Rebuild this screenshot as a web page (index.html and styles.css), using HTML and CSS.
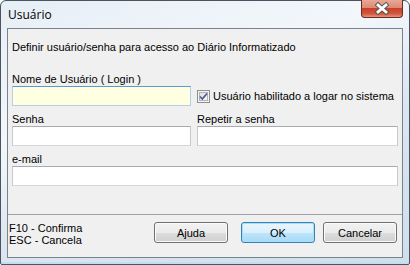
FILE: index.html
```html
<!DOCTYPE html>
<html>
    <head>
        <title>Usuário</title>
        <link rel="stylesheet" href="styles.css">
    </head>
    <body>
        <div class="window">
            <div class="titlebar">
                <span class="title">Usuário</span>
                <div class="close-button">
                    <svg width="40" height="17" viewBox="0 0 40 17">
                        <path d="M16 5 L24 12 M24 5 L16 12" fill="none" stroke="#505050" stroke-width="4.6" stroke-linecap="square"/>
                        <path d="M16 5 L24 12 M24 5 L16 12" fill="none" stroke="#ffffff" stroke-width="2.8" stroke-linecap="square"/>
                    </svg>
                </div>
            </div>
            <div class="client">
                <div class="form-area">
                    <p class="intro">Definir usuário/senha para acesso ao Diário Informatizado</p>

                    <div class="row">
                        <div class="field">
                            <label class="label">Nome de Usuário ( Login )</label>
                            <div class="row-inline">
                                <input class="textbox textbox-focus" type="text">
                                <label class="check">
                                    <svg class="check-box" width="13" height="13" viewBox="0 0 13 13">
                                        <defs>
                                            <linearGradient id="cb" x1="0" y1="0" x2="1" y2="1">
                                                <stop offset="0" stop-color="#dcdcdc"/>
                                                <stop offset="1" stop-color="#fbfbfb"/>
                                            </linearGradient>
                                        </defs>
                                        <rect x="0.5" y="0.5" width="12" height="12" fill="#f4f4f4" stroke="#8e8f8f"/>
                                        <rect x="2.5" y="2.5" width="8" height="8" fill="url(#cb)" stroke="#b4b4b4"/>
                                        <path d="M3 6.5 L5.3 9 L10 3.5" fill="none" stroke="#4a5f97" stroke-width="1.8"/>
                                    </svg>
                                    Usuário habilitado a logar no sistema
                                </label>
                            </div>
                        </div>
                    </div>

                    <div class="row">
                        <div class="field field-left">
                            <label class="label">Senha</label>
                            <input class="textbox" type="password">
                        </div>
                        <div class="field">
                            <label class="label">Repetir a senha</label>
                            <input class="textbox" type="password">
                        </div>
                    </div>

                    <div class="row">
                        <div class="field">
                            <label class="label">e-mail</label>
                            <input class="textbox textbox-wide" type="text">
                        </div>
                    </div>
                </div>

                <div class="bottom-panel">
                    <div class="shortcuts">
                        <div>F10 - Confirma</div>
                        <div>ESC - Cancela</div>
                    </div>
                    <div class="buttons">
                        <button class="button help-button">Ajuda</button>
                        <button class="button button-default">OK</button>
                        <button class="button">Cancelar</button>
                    </div>
                </div>
            </div>
        </div>
    </body>
</html>
```

FILE: styles.css
```css
body{
    margin: 0;
    background-color: #ffffff;
    font-family: "Liberation Sans", Arial, sans-serif;
    font-size: 11px;
    color: #000000;
}

.window{
    width: 410px;
    height: 265px;
    box-sizing: border-box;
    border: 1px solid #4b545e;
    border-radius: 6px 6px 2px 2px;
    background: linear-gradient(160deg, #e6eef6 0%, #f3f7fb 35%, #dbe6f1 60%, #cfdfec 100%);
    padding: 0 6px 6px 6px;
    display: flex;
    flex-direction: column;
    box-shadow: inset 0 -2px 0 #bfe0ee;
}

.titlebar{
    height: 27px;
    display: flex;
    align-items: flex-start;
}

.title{
    font-family: "Open Sans", "Liberation Sans", sans-serif;
    font-size: 12px;
    margin-top: 5px;
    margin-left: 1px;
    color: #000000;
}

.close-button{
    margin-left: auto;
    margin-top: -1px;
    width: 42px;
    height: 18px;
    border: 1px solid #6a2a20;
    border-top: none;
    border-radius: 0 0 4px 4px;
    box-sizing: border-box;
    background: linear-gradient(#e9a797 0%, #de8a74 45%, #c7412a 50%, #d2563c 80%, #e6957f 100%);
    display: flex;
    justify-content: center;
}

.client{
    flex: 1;
    background-color: #f0f0f0;
    border: 1px solid #78838f;
    display: flex;
    flex-direction: column;
}

.form-area{
    flex: 1;
    padding: 12px 4px 0 4px;
}

.intro{
    margin: 0 0 19px 0;
    line-height: 13px;
}

.row{
    display: flex;
    gap: 6px;
    margin-bottom: 7px;
}

.field{
    flex: 1;
    display: flex;
    flex-direction: column;
}

.field-left{
    flex: 0 0 179px;
}

.label{
    line-height: 13px;
    height: 13px;
}

.row-inline{
    display: flex;
    align-items: center;
}

.textbox{
    height: 20px;
    box-sizing: border-box;
    border: 1px solid #d3d7dd;
    border-top-color: #a9abb1;
    border-left-color: #c6c9d0;
    border-right-color: #c6c9d0;
    background-color: #ffffff;
    margin: 0;
    padding: 0 3px;
    font-family: inherit;
    font-size: 11px;
    outline: none;
}

.row-inline .textbox{
    width: 179px;
}

.textbox-focus{
    background-color: #ffffe1;
    border-color: #b5cfe7;
    border-top-color: #5b9bd1;
}

.textbox-wide{
    width: 100%;
}

.check{
    display: flex;
    align-items: center;
    gap: 3px;
    margin-left: 6px;
}

.bottom-panel{
    height: 35px;
    border-top: 1px solid #a0a0a0;
    display: flex;
    justify-content: space-between;
    padding: 7px 5px 0 1px;
    box-sizing: content-box;
}

.shortcuts{
    line-height: 12px;
}

.buttons{
    display: flex;
    align-items: flex-start;
}

.button{
    width: 74px;
    height: 21px;
    margin-left: 8px;
    border: 1px solid #707070;
    border-radius: 3px;
    background: linear-gradient(#f2f2f2 0%, #ebebeb 50%, #dddddd 51%, #cfcfcf 100%);
    box-shadow: inset 0 0 0 1px #fbfbfb;
    font-family: inherit;
    font-size: 11px;
    color: #000000;
    padding: 0;
    cursor: pointer;
}

.help-button{
    margin-left: 0;
    margin-right: 5px;
}

.button-default{
    border-color: #3c7fb1;
    background: linear-gradient(#eaf6fd 0%, #d9f0fc 50%, #bee6fd 51%, #a7d9f5 100%);
    box-shadow: inset 0 0 0 1px #9fe3fb;
}
```
